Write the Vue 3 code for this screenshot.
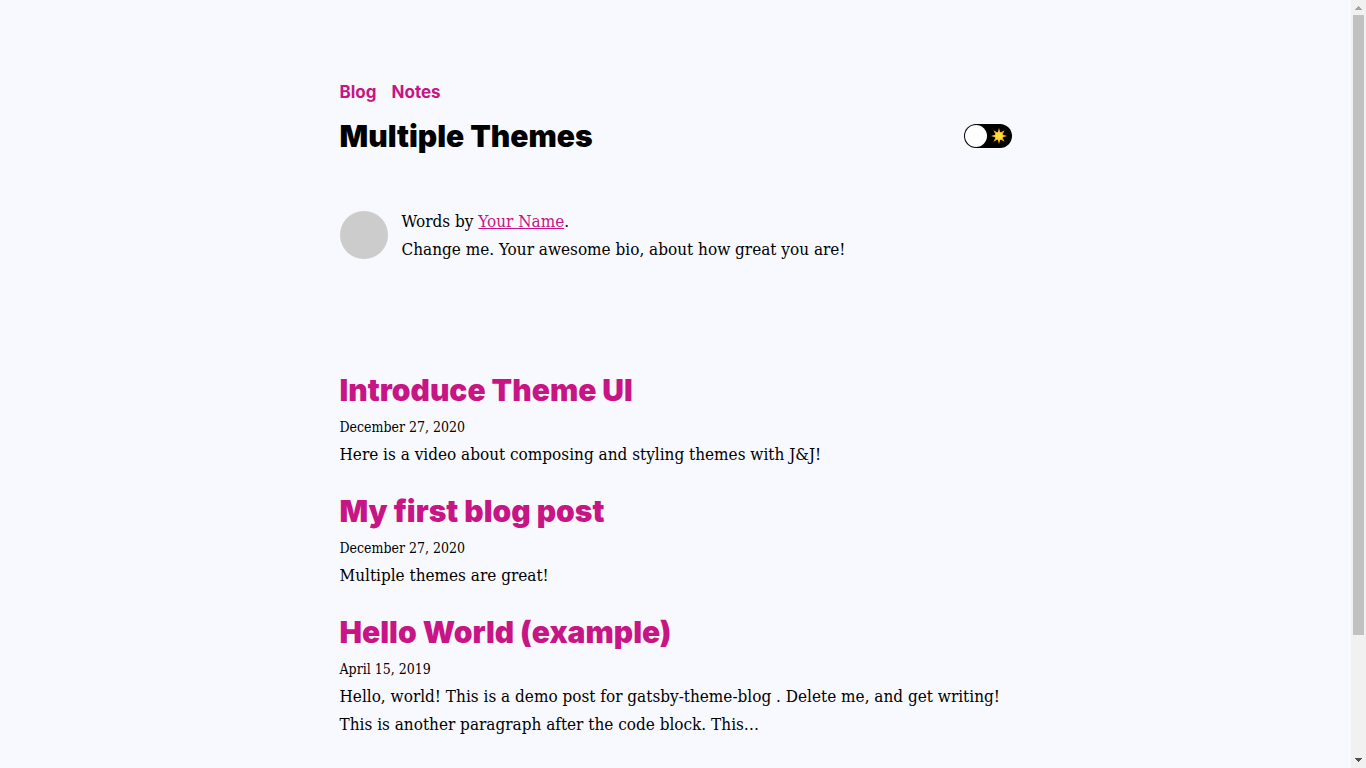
<script setup>
import { ref } from 'vue'

const dark = ref(false)
const posts = [
  { title: 'Introduce Theme UI', date: 'December 27, 2020', lines: ['Here is a video about composing and styling themes with J&J!'] },
  { title: 'My first blog post', date: 'December 27, 2020', lines: ['Multiple themes are great!'] },
  {
    title: 'Hello World (example)',
    date: 'April 15, 2019',
    lines: [
      'Hello, world! This is a demo post for gatsby-theme-blog . Delete me, and get writing!',
      'This is another paragraph after the code block. This…',
    ],
  },
]
</script>

<template>
  <div class="page">
    <div class="container">
      <header>
        <nav>
          <a href="#blog">Blog</a>
          <a href="#notes">Notes</a>
        </nav>
        <div class="brand">
          <h1>Multiple Themes</h1>
          <label class="toggle">
            <input v-model="dark" type="checkbox" role="switch" aria-label="Toggle dark mode" />
            <svg class="sun" viewBox="0 0 16 16" aria-hidden="true">
              <path fill="#f9b21d" d="M8 0l1.4 4.6 4.3-2.3-2.3 4.3L16 8l-4.6 1.4 2.3 4.3-4.3-2.3L8 16l-1.4-4.6-4.3 2.3 2.3-4.3L0 8l4.6-1.4-2.3-4.3 4.3 2.3z" />
              <circle cx="8" cy="8" r="3.8" fill="#ffdb38" />
            </svg>
            <span class="knob"></span>
          </label>
        </div>
      </header>

      <section class="bio">
        <div class="avatar"></div>
        <p>
          Words by <a href="#author">Your Name</a>.<br />
          Change me. Your awesome bio, about how great you are!
        </p>
      </section>

      <main>
        <article v-for="post in posts" :key="post.title">
          <h2><a href="#post">{{ post.title }}</a></h2>
          <small>{{ post.date }}</small>
          <p><template v-for="(line, i) in post.lines" :key="line"><br v-if="i" />{{ line }}</template></p>
        </article>
      </main>
    </div>

    <div class="scrollbar" aria-hidden="true">
      <svg viewBox="0 0 15 15"><path d="M7 6h1v1h1v1h1v1h1v1H4V9h1V8h1V7h1z" fill="#a3a3a3" /></svg>
      <div class="track"><div class="thumb"></div></div>
      <svg viewBox="0 0 15 15"><path d="M4 5h7v1h-1v1H9v1H8v1H7V8H6V7H5V6H4z" fill="#505050" /></svg>
    </div>
  </div>
</template>

<style>
body {
  margin: 0;
  background: #f8f9ff;
}
</style>

<style scoped>
.page {
  box-sizing: border-box;
  min-height: 100vh;
  padding: 78px 31px 30px 16px;
  background: #f8f9ff;
  color: #000;
  font: 17px/28px "DejaVu Serif Condensed", "DejaVu Serif", serif;
}
.container {
  max-width: 672px;
  margin: 0 auto;
}
a {
  color: #c71585;
}
nav {
  display: flex;
  gap: 15px;
  font-family: Inter, sans-serif;
  font-weight: 700;
}
nav a,
h2 a {
  text-decoration: none;
}
.brand {
  display: flex;
  align-items: center;
  justify-content: space-between;
  margin-top: 12px;
}
h1,
h2 {
  margin: 0;
  font: 900 30px/36px Inter, sans-serif;
}
.toggle {
  position: relative;
  box-sizing: border-box;
  flex: none;
  width: 48px;
  height: 24px;
  border-radius: 12px;
  background: #000;
  cursor: pointer;
}
.toggle input {
  position: absolute;
  inset: 0;
  width: 100%;
  height: 100%;
  margin: 0;
  opacity: 0;
}
.sun {
  position: absolute;
  top: 4px;
  right: 5px;
  width: 16px;
  height: 16px;
}
.knob {
  position: absolute;
  top: 1px;
  left: 1px;
  width: 22px;
  height: 22px;
  border-radius: 50%;
  background: #fff;
  pointer-events: none;
}
.toggle input:checked ~ .knob {
  left: 25px;
}
.bio {
  display: flex;
  align-items: center;
  gap: 14px;
  margin-top: 53px;
}
.avatar {
  flex: none;
  width: 48px;
  height: 48px;
  border-radius: 50%;
  background: #ccc;
}
p {
  margin: 0;
}
main {
  display: grid;
  gap: 25px;
  margin-top: 109px;
}
small {
  display: block;
  margin: 9px 0 3px;
  font-size: 14px;
  line-height: 20px;
}
.scrollbar {
  position: fixed;
  top: 0;
  right: 0;
  bottom: 0;
  display: flex;
  flex-direction: column;
  width: 15px;
  background: #f1f1f1;
}
.scrollbar svg {
  display: block;
  width: 15px;
  height: 15px;
}
.track {
  flex: 1;
  padding: 0 2px;
}
.thumb {
  height: 84%;
  background: #c1c1c1;
}
</style>
